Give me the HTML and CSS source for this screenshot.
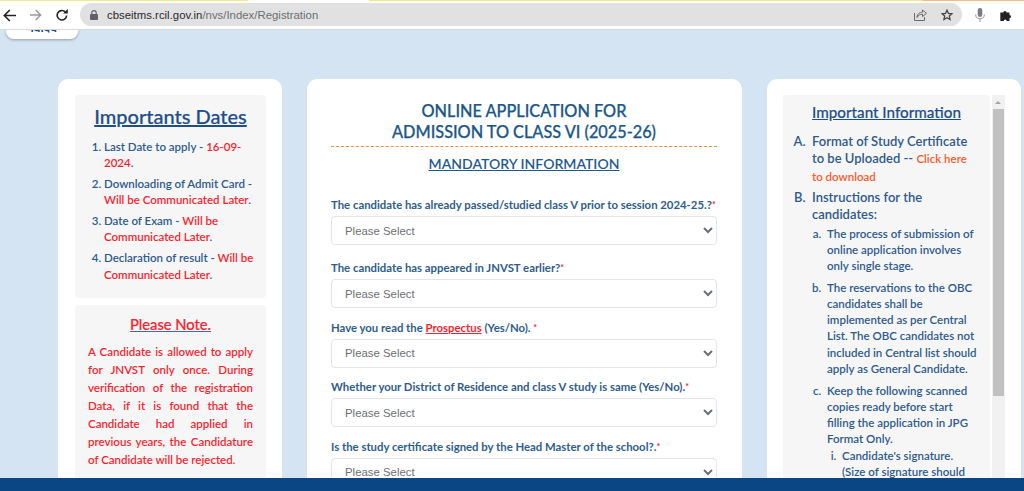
FILE: index.html
```html
<!DOCTYPE html>
<html lang="en">
<head>
<meta charset="utf-8">
<title>Registration</title>
<link rel="stylesheet" href="styles.css">
</head>
<body>
<div class="stripes"><i class="s-y1"></i><i class="s-w"></i><i class="s-y2"></i><i class="s-o"></i></div>
<header class="browser">
  <svg class="ic" width="13" height="13" viewBox="0 0 13 13"><path d="M13 6.500H1.500M6.800 1L1.300 6.500 6.800 12" fill="none" stroke="#222" stroke-width="1.600"/></svg>
  <svg class="ic ic-fwd" width="12" height="12" viewBox="0 0 12 12"><path d="M0 6h10.500M5.700 1l5 5-5 5" fill="none" stroke="#9a9a9a" stroke-width="1.400"/></svg>
  <svg class="ic ic-rel" width="12" height="12" viewBox="0 0 12 12"><path d="M10.600 6.500a4.700 4.700 0 1 1-1.400-3.600" fill="none" stroke="#222" stroke-width="1.600"/><path d="M7 4.500h4.800V0z" fill="#222"/></svg>
  <div class="omni">
    <svg class="lock" width="8" height="10" viewBox="0 0 8 10"><path d="M1.800 4.500V2.800a2.200 2.200 0 0 1 4.400 0V4.500" fill="none" stroke="#5f6368" stroke-width="1.100"/><rect x="0" y="4" width="8" height="6" rx="1" fill="#5f6368"/></svg>
    <span class="url"><b>cbseitms.rcil.gov.in</b>/nvs/Index/Registration</span>
    <span class="omni-end">
      <svg width="13" height="13" viewBox="0 0 13 13"><path d="M.5 5v7.500h10V9" fill="none" stroke="#6a6a6a" stroke-width="1"/><path d="M3 9.500c0-3.800 2.800-5.200 5.500-5.200V2l4 3.300-4 3.300V6.200c-2.400 0-4.200.9-5.500 3.300z" fill="none" stroke="#6a6a6a" stroke-width="1"/></svg>
      <svg width="12" height="12" viewBox="0 0 12 12"><path d="M6 1.200l1.450 3.200 3.450.35-2.600 2.300.75 3.400L6 8.700l-3.050 1.750.75-3.400-2.600-2.300 3.450-.35z" fill="none" stroke="#444" stroke-width="1.300"/></svg>
    </span>
  </div>
  <svg class="ic-mic" width="10" height="14" viewBox="0 0 10 14"><rect x="2.700" y="0" width="4.600" height="9" rx="2.300" fill="#7d7a80"/><path d="M.6 6.500a4.400 4.400 0 0 0 8.800 0M5 11v3" fill="none" stroke="#a19fa3" stroke-width="1.100"/></svg>
  <svg class="ic-ext" width="12" height="12" viewBox="0 0 12 12"><path d="M.3 3.500h3a1.600 1.600 0 1 1 3.200 0h3v2.600a1.500 1.500 0 1 1 0 3V12H6.700a1.500 1.500 0 1 0-3 0H.3z" fill="#222"/></svg>
</header>
<main class="page">
  <div class="logo-tab"><span>नवोदय</span></div>
  <div class="cards">
    <aside class="card card-left">
      <section class="panel panel-dates">
        <h2 class="dates-title">Importants Dates</h2>
        <ol class="dates">
          <li>Last Date to apply - <em>16-09-2024</em>.</li>
          <li>Downloading of Admit Card - <em>Will be Communicated Later</em>.</li>
          <li>Date of Exam - <em>Will be Communicated Later</em>.</li>
          <li>Declaration of result - <em>Will be Communicated Later</em>.</li>
        </ol>
      </section>
      <section class="panel panel-note">
        <h3 class="note-title">Please Note.</h3>
        <p class="note">A Candidate is allowed to apply for JNVST only once. During verification of the registration Data, if it is found that the Candidate had applied in previous years, the Candidature of Candidate will be rejected.</p>
      </section>
    </aside>
    <section class="card card-main">
      <h1 class="form-title">ONLINE APPLICATION FOR<br>ADMISSION TO CLASS VI (2025-26)</h1>
      <h2 class="form-sub"><u>MANDATORY INFORMATION</u></h2>
      <form class="form">
        <div class="field">
          <label>The candidate has already passed/studied class V prior to session 2024-25.?<sup>*</sup></label>
          <select><option>Please Select</option></select>
        </div>
        <div class="field field-second">
          <label>The candidate has appeared in JNVST earlier?<sup>*</sup></label>
          <select><option>Please Select</option></select>
        </div>
        <div class="field">
          <label>Have you read the <a href="#">Prospectus</a> (Yes/No). <sup>*</sup></label>
          <select><option>Please Select</option></select>
        </div>
        <div class="field">
          <label>Whether your District of Residence and class V study is same (Yes/No).<sup>*</sup></label>
          <select><option>Please Select</option></select>
        </div>
        <div class="field">
          <label>Is the study certificate signed by the Head Master of the school?.<sup>*</sup></label>
          <select><option>Please Select</option></select>
        </div>
      </form>
    </section>
    <aside class="card card-right">
      <section class="panel panel-info">
        <h2 class="info-title">Important Information</h2>
        <ol class="info-a" type="A">
          <li>Format of Study Certificate to be Uploaded -- <a href="#">Click here to download</a></li>
          <li>Instructions for the candidates:
            <ol class="info-b" type="a">
              <li>The process of submission of online application involves only single stage.</li>
              <li>The reservations to the OBC candidates shall be implemented as per Central List. The OBC candidates not included in Central list should apply as General Candidate.</li>
              <li>Keep the following scanned copies ready before start filling the application in JPG Format Only.
                <ol class="info-c" type="i">
                  <li>Candidate's signature. (Size of signature should be between 10-100 KB)</li>
                </ol>
              </li>
            </ol>
          </li>
        </ol>
      </section>
      <div class="scrollbar"><div class="sb-arrow"></div><div class="sb-thumb"></div></div>
    </aside>
  </div>
</main>
<footer class="bottom"></footer>
</body>
</html>
```
FILE: styles.css
```css
* { box-sizing: border-box; }
html, body { height: 100%; }
body {
  margin: 0;
  height: 491px;
  overflow: hidden;
  display: flex;
  flex-direction: column;
  background: #d4e4f3;
  font-family: Lato, "Liberation Sans", sans-serif;
  color: #24507f;
}
.stripes { display: flex; height: 1px; flex: none; background: #fff; }
.stripes i { display: block; height: 1px; }
.s-y1 { width: 248px; background: #fde68a; }
.s-w { width: 121px; background: #fff; }
.s-y2 { width: 554px; background: #fde68a; }
.s-o { flex: 1; background: #f8b98a; }
.browser {
  flex: none;
  height: 29px;
  display: flex;
  align-items: center;
  background: #fff;
  border-bottom: 1px solid #d9d9d9;
  padding-left: 3px;
}
.ic { flex: none; }
.ic-fwd { margin-left: 14px; }
.ic-rel { margin-left: 14px; }
.omni {
  flex: none;
  width: 882px;
  height: 23px;
  margin-left: 12px;
  margin-top: -1px;
  display: flex;
  align-items: center;
  background: #e1e1e1;
  border-radius: 12px;
  padding: 0 9px 0 10px;
}
.lock { flex: none; }
.url { margin-left: 9px; font: 11.350px "Liberation Sans", sans-serif; color: #6b6e72; letter-spacing: .02px; white-space: nowrap; }
.url b { font-weight: 400; color: #26292c; }
.omni-end { margin-left: auto; display: flex; gap: 14px; align-items: center; }
.ic-mic { flex: none; margin-left: 13px; }
.ic-ext { flex: none; margin-left: 15px; }
.page {
  flex: 1;
  min-height: 0;
  overflow: hidden;
  position: relative;
  padding: 49px 2px 0 58px;
}
.logo-tab {
  position: absolute;
  left: 6px;
  top: 0;
  width: 72px;
  height: 9px;
  background: #fff;
  border-radius: 0 0 8px 8px;
  box-shadow: 0 1px 3px rgba(0,0,0,.3);
  overflow: hidden;
  text-align: center;
  font: 700 11px/1 "Noto Sans", sans-serif;
  color: #1d4a86;
}
.logo-tab span { display: block; margin-top: -8px; }
.cards { display: flex; gap: 25px; align-items: stretch; height: 420px; }
.card { background: #fff; border-radius: 10px; flex: none; }
.card-left { width: 224px; padding: 16px 16px 0 17px; }
.card-main { width: 435px; padding: 21px 25px 0 24px; }
.card-right { width: 254px; padding: 16px 17px 0 16px; display: flex; gap: 2px; align-items: flex-start; }
.panel { background: #f6f6f6; border-radius: 4px; }
.panel-dates { height: 203px; padding: 8px 8px 0 0; }
.dates-title {
  margin: 0;
  text-align: center;
  font-size: 20px;
  line-height: 26px;
  font-weight: 500;
  color: #1c4f8c;
  text-decoration: underline;
  -webkit-text-stroke: .2px #1c4f8c;
  padding-left: 8px;
}
.dates {
  margin: 10px 0 0;
  padding: 0 0 0 29px;
  font-size: 11.500px;
  line-height: 16.300px;
  font-weight: 600;
  color: #2f5a8c;
}
.dates li { margin-bottom: 4.500px; }
.dates em { font-style: normal; color: #fb1f2f; font-weight: 600; }
.panel-note { margin-top: 7px; height: 300px; padding: 9px 13px 0 13px; color: #fb1f2f; }
.note-title {
  margin: 0;
  text-align: center;
  font-size: 14.700px;
  line-height: 20px;
  font-weight: 500;
  text-decoration: underline;
  text-decoration-color: #3a6ca8;
  -webkit-text-stroke: .2px #fb1f2f;
}
.note {
  margin: 8.500px 0 0;
  font-size: 11.500px;
  line-height: 18px;
  font-weight: 600;
  text-align: justify;
}
.form-title {
  margin: 0;
  text-align: center;
  font-size: 16.300px;
  line-height: 21px;
  font-weight: 500;
  color: #1a5788;
  padding-bottom: 4px;
  border-bottom: 1px dashed #f58a3c;
  -webkit-text-stroke: .25px #1a5788;
}
.form-sub {
  margin: 7px 0 0;
  text-align: center;
  font-size: 14px;
  line-height: 19px;
  font-weight: 600;
  color: #1f5a8f;
}
.form { margin-top: 25px; display: flex; flex-direction: column; }
.field { display: flex; flex-direction: column; }
.field + .field { margin-top: 12.500px; }
.field + .field-second { margin-top: 16px; }
.field label {
  font-size: 11.350px;
  line-height: 14px;
  font-weight: 700;
  color: #2f5d8a;
  margin-bottom: 4px;
  white-space: nowrap;
}
.field label a { color: #fb1f2f; }
.field sup { color: #fb1f2f; font-size: 9px; line-height: 0; vertical-align: baseline; position: relative; top: -1px; }
.field select {
  width: 386px;
  height: 29px;
  padding: 0 6px 0 9px;
  background: #fff;
  border: 1px solid #e2e5e8;
  border-radius: 4px;
  font: 11.400px "Liberation Sans", sans-serif;
  color: #6c6f73;
}
.panel-info { width: 207px; height: 400px; flex: none; padding: 6px 13px 0 0; }
.info-title {
  margin: 0;
  text-align: center;
  font-size: 15.200px;
  line-height: 22px;
  font-weight: 500;
  color: #1c4f8c;
  text-decoration: underline;
  -webkit-text-stroke: .15px #1c4f8c;
  padding-left: 13px;
}
.info-a { margin: 10px 0 0; padding: 0 0 0 29px; font-size: 13px; line-height: 17.250px; font-weight: 600; color: #2f5a8c; }
.info-a > li { margin-bottom: 4px; }
.info-a > li::marker { content: counter(list-item, upper-alpha) ".  "; }
.info-a a { color: #ff5a2c; text-decoration: none; font-size: 11.500px; font-weight: 600; }
.info-b { margin: 2.500px 0 0; padding: 0 0 0 15px; font-size: 11.500px; line-height: 16.200px; font-weight: 600; }
.info-b > li { margin-bottom: 5.500px; }
.info-b > li::marker { content: counter(list-item, lower-alpha) ".  "; }
.info-c { margin: .5px 0 0; padding: 0 0 0 15px; }
.info-c > li::marker { content: counter(list-item, lower-roman) ".  "; }
.scrollbar { width: 13px; height: 400px; flex: none; background: #f1f1f1; padding: 14px 1px 0; position: relative; }
.sb-arrow {
  position: absolute;
  left: 3px;
  top: 6px;
  width: 0;
  height: 0;
  border-left: 3px solid transparent;
  border-right: 3px solid transparent;
  border-bottom: 3px solid #a3a3a3;
}
.sb-thumb { height: 287px; background: #c1c1c1; }
.bottom { flex: none; height: 13px; background: #0a4584; }
```
